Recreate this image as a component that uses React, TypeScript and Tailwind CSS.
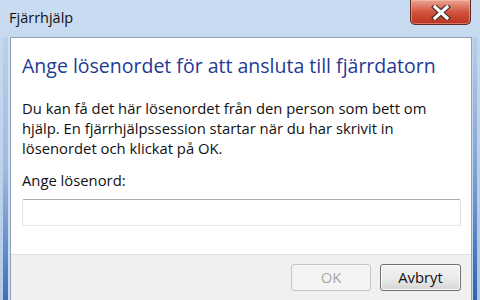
import React from "react";

export default function App() {
  return (
    <div
      className="w-[480px] h-[300px] overflow-hidden flex flex-col bg-gradient-to-b from-[#cadcf1] via-[#bcd2ec] to-[#a6c1e3]"
      style={{ fontFamily: '"Open Sans", "Noto Sans", sans-serif' }}
    >
      {/* Title bar */}
      <div className="h-[37px] flex items-start shrink-0">
        <div className="pl-[9px] pt-[8px] text-[14.5px] leading-[20px] text-[#111]">Fjärrhjälp</div>
        <div className="ml-auto mr-[9px] w-[61px] h-[25px] rounded-b-[5px] border border-t-0 border-[#5a2a24] bg-gradient-to-b from-[#e9a593] via-[#d2533f] to-[#b8331f] flex items-center justify-center shadow-[inset_0_0_0_1px_rgba(255,200,190,0.45)]">
          <svg width="20" height="15" viewBox="0 0 20 15">
            <path
              d="M4 2 L16 13 M16 2 L4 13"
              stroke="#4a2a26"
              strokeWidth="5.5"
              strokeLinecap="square"
            />
            <path
              d="M4 2 L16 13 M16 2 L4 13"
              stroke="#ffffff"
              strokeWidth="3.2"
              strokeLinecap="square"
            />
          </svg>
        </div>
      </div>

      {/* Body with side frames */}
      <div className="flex-1 flex">
        <div className="w-[10px] flex">
          <div className="w-[3px] bg-gradient-to-b from-[#c7d9ef] to-[#b4cbe7]" />
          <div className="w-[5px] bg-gradient-to-b from-[#bcd1ea] via-[#9fbbe0] to-[#3e6fb8]" />
          <div className="w-[2px] bg-gradient-to-b from-[#d3e1f2] to-[#c9d8ec]" />
        </div>

        <div className="flex-1 flex flex-col border border-b-0 border-[#8f9fb5]">
          {/* White area */}
          <div className="h-[216px] bg-white flex flex-col pl-[11px] pr-[10px]">
            <div className="pt-[15px] text-[19.5px] leading-[26px] text-[#1f3a93] whitespace-nowrap">
              Ange lösenordet för att ansluta till fjärrdatorn
            </div>
            <div className="mt-[19px] text-[14.8px] leading-[20px] text-[#111] whitespace-nowrap">
              <div>Du kan få det här lösenordet från den person som bett om</div>
              <div>hjälp. En fjärrhjälpssession startar när du har skrivit in</div>
              <div>lösenordet och klickat på OK.</div>
            </div>
            <div className="mt-[12px] text-[14.8px] leading-[20px] text-[#111]">Ange lösenord:</div>
            <div className="mt-[9px] w-[439px] h-[27px] border border-[#abadb3] border-b-[#e3e9ef] border-l-[#e2e3ea] border-r-[#dbdfe6] rounded-[2px] bg-white" />
          </div>
          {/* Footer */}
          <div className="flex-1 bg-[#f0f0f0] border-t border-[#dfdfdf] flex justify-end items-start pt-[9px] pr-[10px] gap-[9px]">
            <div className="w-[80px] h-[27px] rounded-[3px] border border-[#c3c6c9] bg-[#f4f4f4] flex items-center justify-center text-[14.8px] text-[#a7a7a7]">
              OK
            </div>
            <div className="w-[81px] h-[27px] rounded-[3px] border border-[#707070] bg-gradient-to-b from-[#f3f3f3] via-[#ebebeb] to-[#d6d6d6] flex items-center justify-center text-[14.8px] text-[#111] shadow-[inset_0_0_0_1px_rgba(255,255,255,0.8)]">
              Avbryt
            </div>
          </div>
        </div>

        <div className="w-[10px] flex">
          <div className="w-[1px] bg-[#c9d6e6]" />
          <div className="w-[4px] bg-gradient-to-b from-[#b9cfea] via-[#7fa3d6] to-[#2f63b2]" />
          <div className="w-[5px] bg-gradient-to-b from-[#c4d7ee] to-[#aec6e5]" />
        </div>
      </div>
    </div>
  );
}
